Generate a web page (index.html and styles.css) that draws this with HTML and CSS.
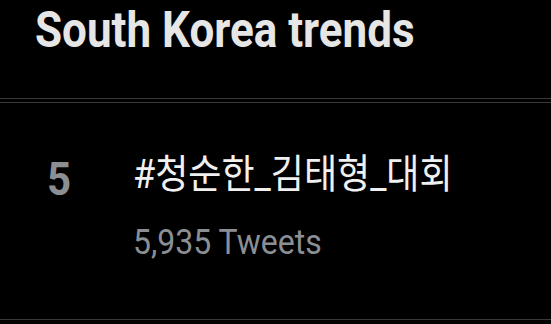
FILE: index.html
```html
<!DOCTYPE html>
<html lang="ko">
<head>
  <meta charset="UTF-8">
  <meta name="viewport" content="width=device-width, initial-scale=1.0">
  <title>South Korea trends</title>
  <link rel="stylesheet" href="styles.css">
</head>
<body>
  <div class="panel">
    <h2 class="panel-title">South Korea trends</h2>
    <div class="divider"></div>
    <div class="trend">
      <div class="rank">5</div>
      <div class="trend-body">
        <div class="tag">#청순한_김태형_대회</div>
        <div class="count">5,935 Tweets</div>
      </div>
    </div>
  </div>
</body>
</html>
```

FILE: styles.css
```css
* {
  box-sizing: border-box;
}

body {
  margin: 0;
  background-color: #000000;
  font-family: Roboto, "Noto Sans CJK KR", sans-serif;
  width: 551px;
  height: 324px;
  overflow: hidden;
}

.panel {
  width: 551px;
}

/* the screenshot is a little stretched vertically */
.panel-title,
.rank,
.tag,
.count {
  transform: scaleY(1.12);
  transform-origin: left center;
}

.panel-title {
  margin: 0;
  padding-top: 8px;
  padding-left: 35px;
  height: 98px;
  font-size: 44px;
  font-weight: 700;
  color: #e6e6e6;
  line-height: 45px;
  transform-origin: left 30px;
}

.divider {
  height: 5px;
  border-top: 1px solid #3a3a3a;
  border-bottom: 1px solid #3a3a3a;
}

.trend {
  display: flex;
  align-items: flex-start;
  height: 217px;
  border-bottom: 1px solid #3a3a3a;
  padding-top: 48px;
}

.rank {
  width: 133px;
  padding-left: 47px;
  font-size: 42px;
  font-weight: 700;
  color: #8b8f94;
  line-height: 55px;
}

.trend-body {
  padding-top: 2px;
}

.tag {
  font-size: 36px;
  color: #f0f0f0;
  line-height: 45px;
}

.count {
  margin-top: 24px;
  font-size: 32px;
  color: #8b8f94;
  line-height: 40px;
}
```
